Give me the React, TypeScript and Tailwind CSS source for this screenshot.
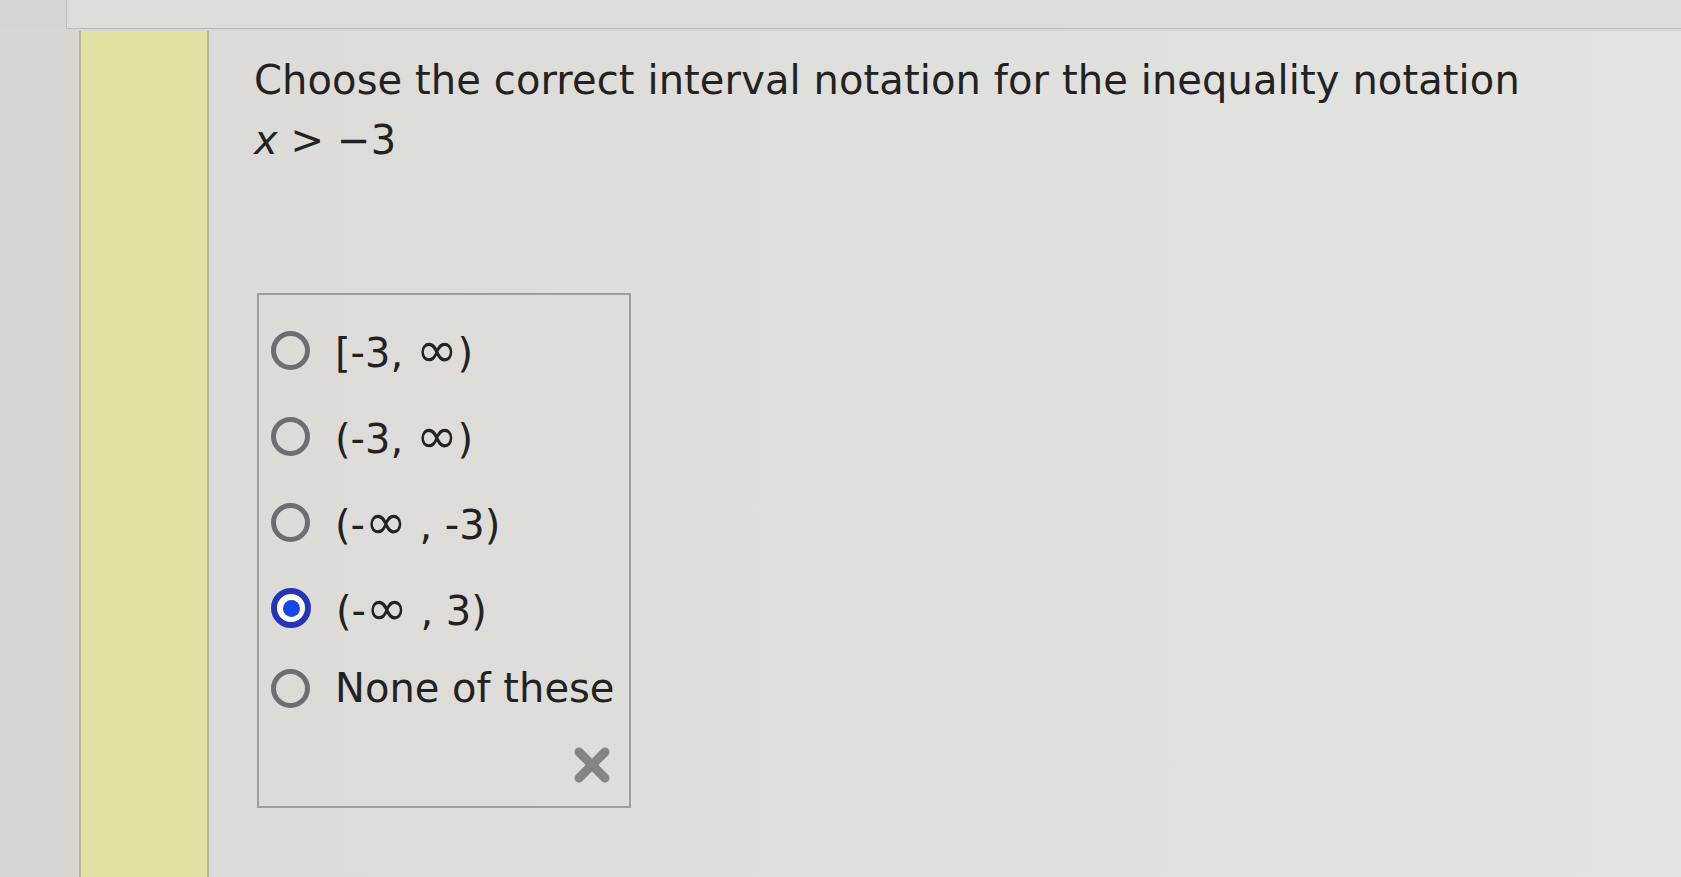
const options = [
  { parts: ["[-3, ", "∞", ")"], selected: false },
  { parts: ["(-3, ", "∞", ")"], selected: false },
  { parts: ["(-", "∞", " , -3)"], selected: false },
  { parts: ["(-", "∞", " , 3)"], selected: true },
  { parts: ["None of these"], selected: false },
];

function Radio({ selected }: { selected: boolean }) {
  if (selected) {
    return (
      <span className="w-[40px] h-[40px] rounded-full border-[6px] border-[#2536b5] bg-white flex items-center justify-center shrink-0">
        <span className="w-[17px] h-[17px] rounded-full bg-[#1447e6]" />
      </span>
    );
  }
  return (
    <span className="w-[39px] h-[39px] rounded-full border-[5px] border-[#6f6c74] shrink-0" />
  );
}

export default function App() {
  return (
    <div
      className="w-full h-[877px] flex flex-col bg-[#d8d7d4] overflow-hidden text-[#222222]"
      style={{ fontFamily: '"DejaVu Sans", Verdana, sans-serif' }}
    >
      <div className="flex h-[29px] shrink-0">
        <div className="w-[66px] bg-[#d6d5d2]" />
        <div className="flex-1 bg-[#dddcd9] border-l border-b border-[#bdbcb9]" />
      </div>

      <div className="flex flex-1 pt-[2px]">
        <div className="w-[79px] shrink-0 bg-[#d6d5d2]" />
        <div className="w-[130px] shrink-0 bg-[#e0e1a3] border-x-2 border-[#b4b592]" />

        <main className="flex-1 bg-linear-to-r from-[#dcdbd8] to-[#e3e3e1] pl-[45px] pt-[19px]">
          <h1 className="text-[40px] leading-[60px] tracking-[0.1px]">
            Choose the correct interval notation for the inequality notation
            <br />
            <i>x</i> &gt; −3
          </h1>

          <div className="mt-[123px] ml-[3px] w-[374px] h-[515px] border-2 border-[#9e9e9c] pt-[12px] pl-[12px] flex flex-col">
            {options.map((o, i) => (
              <label
                key={i}
                className={`flex items-center gap-[25px] ${
                  i === options.length - 1 ? "h-[74px]" : "h-[86px]"
                }`}
              >
                <Radio selected={o.selected} />
                <span className="text-[40px] leading-none">
                  {o.parts.map((p, j) =>
                    p === "∞" ? (
                      <span key={j} className="text-[50px] leading-none">
                        ∞
                      </span>
                    ) : (
                      <span key={j}>{p}</span>
                    )
                  )}
                </span>
              </label>
            ))}

            <div className="flex justify-end pr-[18px] mt-[21px]">
              <svg width="38" height="38" viewBox="0 0 38 38">
                <path
                  d="M6 6 L32 32 M32 6 L6 32"
                  stroke="#858585"
                  strokeWidth="9"
                  strokeLinecap="round"
                />
              </svg>
            </div>
          </div>
        </main>
      </div>
    </div>
  );
}
